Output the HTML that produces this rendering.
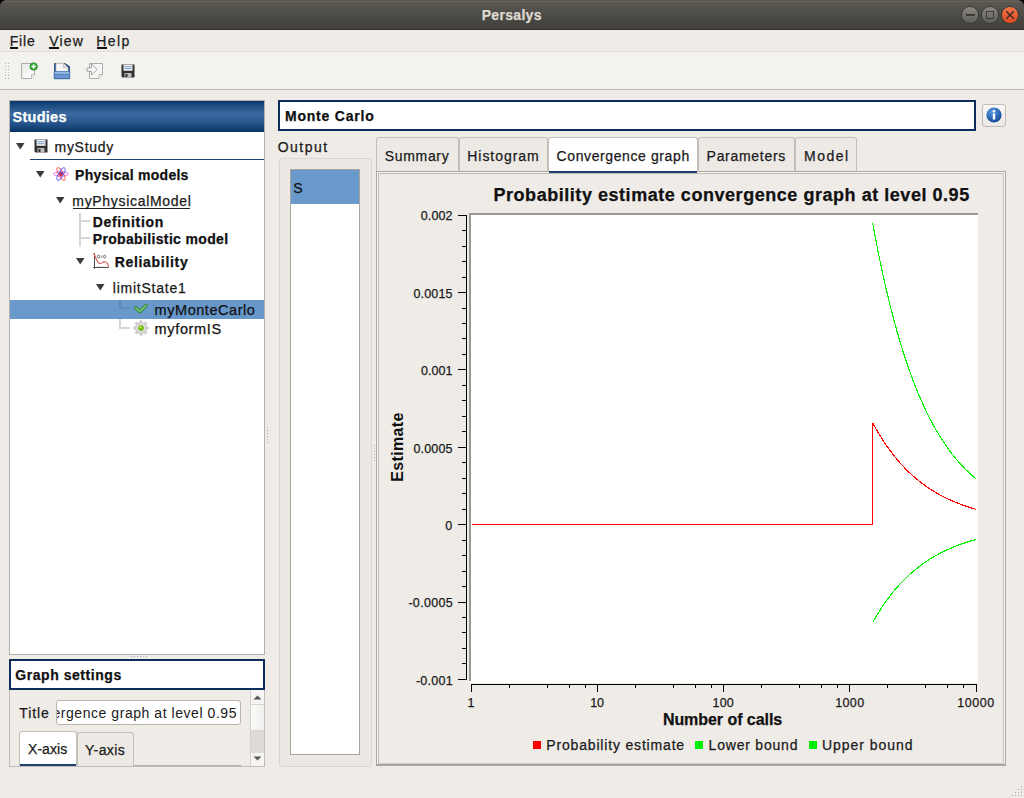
<!DOCTYPE html>
<html><head><meta charset='utf-8'><style>
html,body{margin:0;padding:0;}
body{width:1024px;height:798px;position:relative;overflow:hidden;background:#efebe7;font-family:"Liberation Sans", sans-serif;}
.t{position:absolute;white-space:pre;line-height:1;font-family:"Liberation Sans", sans-serif;-webkit-text-stroke:0.25px currentColor;}
</style></head><body>
<div style='position:absolute;left:0;top:0;width:1024px;height:8px;background:#000'></div>
<div style='position:absolute;left:0px;top:0px;width:1024px;height:30px;background:linear-gradient(#5b5952,#3f3e3a);border-radius:6px 6px 0 0'></div>
<div style='position:absolute;left:4px;top:1px;width:1016px;height:1px;background:#67645c'></div>
<div style='position:absolute;left:0px;top:29px;width:1024px;height:1px;background:#33322e'></div>
<div style='position:absolute;left:962px;top:6.699999999999999px;width:16px;height:16px;border-radius:50%;background:linear-gradient(#8a8881,#5e5d57);box-shadow:0 0 0 1px #3a3935'></div>
<div style='position:absolute;left:982px;top:6.699999999999999px;width:16px;height:16px;border-radius:50%;background:linear-gradient(#8a8881,#5e5d57);box-shadow:0 0 0 1px #3a3935'></div>
<div style='position:absolute;left:1002px;top:6.699999999999999px;width:16px;height:16px;border-radius:50%;background:linear-gradient(#f37549,#dc4a20);box-shadow:0 0 0 1px #3a3935'></div>
<div style='position:absolute;left:966px;top:14.2px;width:9px;height:1.5px;background:#3b3a36'></div>
<div style='position:absolute;left:986px;top:11px;width:8px;height:8px;box-sizing:border-box;border:1.3px solid #3b3a36'></div>
<svg style='position:absolute;left:1005px;top:10px' width='10' height='10'><path d='M1.3 1.3L8.7 8.7M8.7 1.3L1.3 8.7' stroke='#2d2a28' stroke-width='1.3'/></svg>
<div style='position:absolute;left:0px;top:30px;width:1024px;height:21px;background:#efebe7'></div>
<div style='position:absolute;left:10px;top:47px;width:8px;height:2px;background:#111'></div>
<div style='position:absolute;left:49px;top:47px;width:10px;height:2px;background:#111'></div>
<div style='position:absolute;left:97px;top:47px;width:10px;height:2px;background:#111'></div>
<div style='position:absolute;left:0px;top:51px;width:1024px;height:38px;background:#f4f2ef;border-top:1px solid #e2ded9;box-sizing:border-box'></div>
<div style='position:absolute;left:0px;top:89px;width:1024px;height:1px;background:#bdb8b2'></div>
<div style='position:absolute;left:5px;top:63px;width:1px;height:1px;background:#b9b5b0'></div>
<div style='position:absolute;left:8px;top:63px;width:1px;height:1px;background:#b9b5b0'></div>
<div style='position:absolute;left:5px;top:66px;width:1px;height:1px;background:#b9b5b0'></div>
<div style='position:absolute;left:8px;top:66px;width:1px;height:1px;background:#b9b5b0'></div>
<div style='position:absolute;left:5px;top:69px;width:1px;height:1px;background:#b9b5b0'></div>
<div style='position:absolute;left:8px;top:69px;width:1px;height:1px;background:#b9b5b0'></div>
<div style='position:absolute;left:5px;top:72px;width:1px;height:1px;background:#b9b5b0'></div>
<div style='position:absolute;left:8px;top:72px;width:1px;height:1px;background:#b9b5b0'></div>
<div style='position:absolute;left:5px;top:75px;width:1px;height:1px;background:#b9b5b0'></div>
<div style='position:absolute;left:8px;top:75px;width:1px;height:1px;background:#b9b5b0'></div>
<div style='position:absolute;left:5px;top:78px;width:1px;height:1px;background:#b9b5b0'></div>
<div style='position:absolute;left:8px;top:78px;width:1px;height:1px;background:#b9b5b0'></div>
<div style='position:absolute;left:9px;top:100px;width:256px;height:555px;box-sizing:border-box;border:1px solid #b5b0aa;background:#fff'></div>
<div style='position:absolute;left:10px;top:101px;width:254px;height:31px;background:linear-gradient(#0b386c 0%,#25558b 22%,#3a6a9f 42%,#25558a 72%,#073266 100%)'></div>
<svg style='position:absolute;left:16px;top:143px' width='9' height='7'><path d='M0 0H8.5L4.25 6.6Z' fill='#3c3c3c'/></svg>
<svg style='position:absolute;left:34px;top:139px' width='14' height='14' viewBox='0 0 14 14'>
<path d='M0.5 0.5H13.5V13.5H1.5L0.5 12.5Z' fill='#2f2f2f'/>
<rect x='2.5' y='0.8' width='9' height='6' fill='#eef3f8'/>
<rect x='3.5' y='2.2' width='7' height='1' fill='#7d9ec4'/>
<rect x='3.5' y='4.2' width='7' height='1' fill='#7d9ec4'/>
<rect x='3.5' y='9' width='7' height='4.5' fill='#bdbdbd'/>
<rect x='4.5' y='10' width='2' height='3' fill='#2f2f2f'/>
</svg>
<div style='position:absolute;left:30px;top:159px;width:234px;height:1px;background:#1b426e'></div>
<svg style='position:absolute;left:36px;top:171px' width='9' height='7'><path d='M0 0H8.5L4.25 6.6Z' fill='#3c3c3c'/></svg>
<svg style='position:absolute;left:53px;top:167px' width='16' height='14' viewBox='0 0 16 14'>
<ellipse cx='8' cy='7' rx='7.3' ry='2.3' fill='none' stroke='#f070f0' stroke-width='1'/>
<ellipse cx='8' cy='7' rx='7' ry='2.3' fill='none' stroke='#ff5a5a' stroke-width='1' transform='rotate(60 8 7)'/>
<ellipse cx='8' cy='7' rx='7' ry='2.3' fill='none' stroke='#6a6aff' stroke-width='1' transform='rotate(-60 8 7)'/>
<circle cx='8' cy='7' r='2' fill='#d02040'/><circle cx='9' cy='6' r='1' fill='#3050d0'/>
</svg>
<svg style='position:absolute;left:56px;top:197px' width='9' height='7'><path d='M0 0H8.5L4.25 6.6Z' fill='#3c3c3c'/></svg>
<div style='position:absolute;left:73px;top:208px;width:117px;height:1px;background:#222'></div>
<div style='position:absolute;left:79px;top:213px;width:2px;height:34px;background:#d9d5d1'></div>
<div style='position:absolute;left:81px;top:220px;width:9px;height:2px;background:#d9d5d1'></div>
<div style='position:absolute;left:81px;top:237px;width:9px;height:2px;background:#d9d5d1'></div>
<svg style='position:absolute;left:76px;top:258px' width='9' height='7'><path d='M0 0H8.5L4.25 6.6Z' fill='#3c3c3c'/></svg>
<svg style='position:absolute;left:92px;top:252px' width='18' height='18' viewBox='0 0 18 18'>
<rect x='2' y='1.2' width='1' height='15.5' fill='#505050'/>
<rect x='1.2' y='15' width='15.6' height='1' fill='#505050'/>
<path d='M6.5 14.3V15M8.5 14.3V15M11.5 14.3V15M13.5 14.3V15' stroke='#aaa' stroke-width='0.8'/>
<path d='M1.5 1.2C3.5 4 4.5 10 7.5 11.5C9.5 12.3 11 9.3 13 9.7C15 10.2 16.3 12.5 16.6 15' fill='none' stroke='#e05a5a' stroke-width='1.1'/>
<ellipse cx='6.6' cy='4.6' rx='1.3' ry='1.4' fill='none' stroke='#666' stroke-width='0.9'/>
<path d='M8.8 4H10.6M8.8 5.3H10.6' stroke='#777' stroke-width='0.7'/>
<ellipse cx='12.6' cy='4.6' rx='1.1' ry='1.4' fill='none' stroke='#666' stroke-width='0.9'/>
</svg>
<svg style='position:absolute;left:96px;top:284px' width='9' height='7'><path d='M0 0H8.5L4.25 6.6Z' fill='#3c3c3c'/></svg>
<div style='position:absolute;left:10px;top:300px;width:254px;height:19px;background:#6a9acc'></div>
<div style='position:absolute;left:153px;top:300px;width:111px;height:19px;background:#6898ca;box-shadow:inset 1px 0 0 #5f8fc2'></div>
<div style='position:absolute;left:119px;top:300px;width:2px;height:9px;background:#6189b5'></div>
<div style='position:absolute;left:121px;top:307px;width:9px;height:2px;background:#6189b5'></div>
<div style='position:absolute;left:119px;top:319px;width:2px;height:10px;background:#d9d5d1'></div>
<div style='position:absolute;left:121px;top:327px;width:9px;height:2px;background:#d9d5d1'></div>
<svg style='position:absolute;left:133px;top:302px' width='16' height='13' viewBox='0 0 16 13'>
<path d='M3 6L6.8 9.5L13 3.5' fill='none' stroke='#2e7d32' stroke-width='3.6' stroke-linecap='round' stroke-linejoin='round'/>
<path d='M3 6L6.8 9.5L13 3.5' fill='none' stroke='#6cc070' stroke-width='2.0' stroke-linecap='round' stroke-linejoin='round'/>
</svg>
<svg style='position:absolute;left:133px;top:320px' width='16' height='16' viewBox='0 0 16 16'>
<rect x='6.5' y='0.3' width='3' height='3.5' fill='#cdcdcd' transform='rotate(0 8 8)'/><rect x='6.5' y='0.3' width='3' height='3.5' fill='#cdcdcd' transform='rotate(45 8 8)'/><rect x='6.5' y='0.3' width='3' height='3.5' fill='#cdcdcd' transform='rotate(90 8 8)'/><rect x='6.5' y='0.3' width='3' height='3.5' fill='#cdcdcd' transform='rotate(135 8 8)'/><rect x='6.5' y='0.3' width='3' height='3.5' fill='#cdcdcd' transform='rotate(180 8 8)'/><rect x='6.5' y='0.3' width='3' height='3.5' fill='#cdcdcd' transform='rotate(225 8 8)'/><rect x='6.5' y='0.3' width='3' height='3.5' fill='#cdcdcd' transform='rotate(270 8 8)'/><rect x='6.5' y='0.3' width='3' height='3.5' fill='#cdcdcd' transform='rotate(315 8 8)'/><circle cx='8' cy='8' r='5.6' fill='#dadada' stroke='#c4c4c4' stroke-width='0.7'/>
<circle cx='8' cy='8' r='2.5' fill='#7cc400' stroke='#5c9a00' stroke-width='0.5'/><circle cx='7.4' cy='7.3' r='0.9' fill='#d8ff90'/>
</svg>
<div style='position:absolute;left:131px;top:656px;width:1px;height:1px;background:#aaa'></div>
<div style='position:absolute;left:134px;top:656px;width:1px;height:1px;background:#aaa'></div>
<div style='position:absolute;left:137px;top:656px;width:1px;height:1px;background:#aaa'></div>
<div style='position:absolute;left:140px;top:656px;width:1px;height:1px;background:#aaa'></div>
<div style='position:absolute;left:143px;top:656px;width:1px;height:1px;background:#aaa'></div>
<div style='position:absolute;left:146px;top:656px;width:1px;height:1px;background:#aaa'></div>
<div style='position:absolute;left:9px;top:659px;width:256px;height:31px;box-sizing:border-box;border:2px solid #0c2c5c;background:#fff'></div>
<div style='position:absolute;left:9px;top:690px;width:256px;height:77px;box-sizing:border-box;border:1px solid #c2bdb7;border-top:none;background:#efebe7'></div>
<div style='position:absolute;left:56px;top:700px;width:185px;height:25px;box-sizing:border-box;border:1px solid #b9b4ae;border-radius:3px;background:#fff;overflow:hidden'><div style='position:absolute;right:3px;top:0;white-space:pre;font-family:"Liberation Sans";font-size:14px;line-height:25px;color:#1a1a1a;letter-spacing:0.55px'>Probability estimate convergence graph at level 0.95</div></div>
<div style='position:absolute;left:19px;top:765px;width:222px;height:1px;background:#b4afa9'></div>
<div style='position:absolute;left:77px;top:732px;width:57px;height:34px;box-sizing:border-box;border:1px solid #c3beb8;border-bottom:none;border-radius:3px 3px 0 0;background:#edeae6'></div>
<div style='position:absolute;left:19px;top:731px;width:58px;height:35px;box-sizing:border-box;border:1px solid #c3beb8;border-bottom:none;border-radius:3px 3px 0 0;background:#fff'></div>
<div style='position:absolute;left:20px;top:764px;width:56px;height:2px;background:#1b3f6e'></div>
<div style='position:absolute;left:250px;top:690px;width:14px;height:76px;box-sizing:border-box;border-left:1px solid #d6d2cd;background:#f6f5f3'></div>
<div style='position:absolute;left:251px;top:704px;width:13px;height:27px;background:linear-gradient(90deg,#fbfbfa,#f0efed);border-top:1px solid #d9d5d0;border-bottom:1px solid #d9d5d0;box-sizing:border-box'></div>
<div style='position:absolute;left:251px;top:731px;width:13px;height:22px;background:#dedbd7'></div>
<svg style='position:absolute;left:252px;top:694px' width='11' height='7'><path d='M1.5 5.5L5.5 1.5L9.5 5.5Z' fill='#555'/></svg>
<svg style='position:absolute;left:252px;top:755px' width='11' height='7'><path d='M1.5 1.5L5.5 5.5L9.5 1.5Z' fill='#555'/></svg>
<div style='position:absolute;left:267px;top:427px;width:1px;height:1px;background:#aaa'></div>
<div style='position:absolute;left:267px;top:430px;width:1px;height:1px;background:#aaa'></div>
<div style='position:absolute;left:267px;top:433px;width:1px;height:1px;background:#aaa'></div>
<div style='position:absolute;left:267px;top:436px;width:1px;height:1px;background:#aaa'></div>
<div style='position:absolute;left:267px;top:439px;width:1px;height:1px;background:#aaa'></div>
<div style='position:absolute;left:267px;top:442px;width:1px;height:1px;background:#aaa'></div>
<div style='position:absolute;left:278px;top:100px;width:698px;height:31px;box-sizing:border-box;border:2px solid #0c2c5c;background:#fff'></div>
<div style='position:absolute;left:982px;top:104px;width:24px;height:23px;box-sizing:border-box;border:1px solid #c0bbb5;border-radius:3px;background:linear-gradient(#fbfaf9,#ebe8e4)'></div>
<svg style='position:absolute;left:986px;top:107px' width='16' height='16' viewBox='0 0 16 16'>
<defs><radialGradient id='ig' cx='0.4' cy='0.3' r='0.8'><stop offset='0' stop-color='#5a9ae6'/><stop offset='1' stop-color='#0a3f8c'/></radialGradient></defs>
<circle cx='8' cy='8' r='7.6' fill='url(#ig)'/>
<circle cx='8' cy='4.3' r='1.3' fill='#fff'/><rect x='6.8' y='6.5' width='2.4' height='6' fill='#fff'/>
</svg>
<div style='position:absolute;left:279px;top:158px;width:93px;height:609px;box-sizing:border-box;border:1px solid #d9d5d0;border-radius:3px;background:#ece9e5'></div>
<div style='position:absolute;left:290px;top:169px;width:70px;height:586px;box-sizing:border-box;border:1px solid #a9a49e;background:#fff'></div>
<div style='position:absolute;left:291px;top:170px;width:68px;height:34px;background:#6a9acc'></div>
<div style='position:absolute;left:374px;top:445px;width:1px;height:1px;background:#aaa'></div>
<div style='position:absolute;left:374px;top:448px;width:1px;height:1px;background:#aaa'></div>
<div style='position:absolute;left:374px;top:451px;width:1px;height:1px;background:#aaa'></div>
<div style='position:absolute;left:374px;top:454px;width:1px;height:1px;background:#aaa'></div>
<div style='position:absolute;left:374px;top:457px;width:1px;height:1px;background:#aaa'></div>
<div style='position:absolute;left:374px;top:460px;width:1px;height:1px;background:#aaa'></div>
<div style='position:absolute;left:376px;top:171px;width:630px;height:595px;box-sizing:border-box;border:1px solid #aaa59f;background:#efebe7'></div>
<div style='position:absolute;left:377px;top:172px;width:628px;height:593px;box-sizing:border-box;border:1px solid #fbfaf9'></div>
<div style='position:absolute;left:378px;top:173px;width:626px;height:591px;box-sizing:border-box;border:1px solid #bdb8b2;border-right-color:#c8c3bd;border-bottom-color:#c8c3bd'></div>
<div style='position:absolute;left:376px;top:764px;width:630px;height:2px;background:#aaa59f'></div>
<div style='position:absolute;left:378px;top:763px;width:626px;height:1px;background:#cfcac5'></div>
<div style='position:absolute;left:376px;top:137px;width:83px;height:34px;box-sizing:border-box;border:1px solid #c3beb8;border-bottom:none;border-radius:3px 3px 0 0;background:#edeae6'></div>
<div style='position:absolute;left:459px;top:137px;width:89px;height:34px;box-sizing:border-box;border:1px solid #c3beb8;border-bottom:none;border-radius:3px 3px 0 0;background:#edeae6'></div>
<div style='position:absolute;left:698px;top:137px;width:97px;height:34px;box-sizing:border-box;border:1px solid #c3beb8;border-bottom:none;border-radius:3px 3px 0 0;background:#edeae6'></div>
<div style='position:absolute;left:795px;top:137px;width:62px;height:34px;box-sizing:border-box;border:1px solid #c3beb8;border-bottom:none;border-radius:3px 3px 0 0;background:#edeae6'></div>
<div style='position:absolute;left:548px;top:137px;width:150px;height:35px;box-sizing:border-box;border:1px solid #c3beb8;border-bottom:none;border-radius:3px 3px 0 0;background:#fff'></div>
<div style='position:absolute;left:549px;top:171px;width:148px;height:2px;background:#1b3f6e'></div>
<svg style='position:absolute;left:0;top:0' width='1024' height='798' shape-rendering='crispEdges'>
<rect x='469' y='213' width='509' height='470' fill='#fff'/>
<rect x='469' y='213' width='509' height='2' fill='#9a9a98'/>
<rect x='469' y='213' width='2' height='468' fill='#9a9a98'/>
<rect x='466' y='215' width='1' height='465' fill='#000'/>
<rect x='458' y='215' width='8' height='1' fill='#000'/>
<rect x='462' y='230' width='4' height='1' fill='#000'/>
<rect x='462' y='246' width='4' height='1' fill='#000'/>
<rect x='462' y='261' width='4' height='1' fill='#000'/>
<rect x='462' y='277' width='4' height='1' fill='#000'/>
<rect x='458' y='292' width='8' height='1' fill='#000'/>
<rect x='462' y='308' width='4' height='1' fill='#000'/>
<rect x='462' y='323' width='4' height='1' fill='#000'/>
<rect x='462' y='338' width='4' height='1' fill='#000'/>
<rect x='462' y='354' width='4' height='1' fill='#000'/>
<rect x='458' y='369' width='8' height='1' fill='#000'/>
<rect x='462' y='385' width='4' height='1' fill='#000'/>
<rect x='462' y='400' width='4' height='1' fill='#000'/>
<rect x='462' y='416' width='4' height='1' fill='#000'/>
<rect x='462' y='431' width='4' height='1' fill='#000'/>
<rect x='458' y='447' width='8' height='1' fill='#000'/>
<rect x='462' y='462' width='4' height='1' fill='#000'/>
<rect x='462' y='478' width='4' height='1' fill='#000'/>
<rect x='462' y='493' width='4' height='1' fill='#000'/>
<rect x='462' y='509' width='4' height='1' fill='#000'/>
<rect x='458' y='524' width='8' height='1' fill='#000'/>
<rect x='462' y='540' width='4' height='1' fill='#000'/>
<rect x='462' y='555' width='4' height='1' fill='#000'/>
<rect x='462' y='571' width='4' height='1' fill='#000'/>
<rect x='462' y='586' width='4' height='1' fill='#000'/>
<rect x='458' y='602' width='8' height='1' fill='#000'/>
<rect x='462' y='617' width='4' height='1' fill='#000'/>
<rect x='462' y='632' width='4' height='1' fill='#000'/>
<rect x='462' y='648' width='4' height='1' fill='#000'/>
<rect x='462' y='663' width='4' height='1' fill='#000'/>
<rect x='458' y='679' width='8' height='1' fill='#000'/>
<rect x='471' y='684' width='506' height='1' fill='#000'/>
<rect x='471' y='684' width='1' height='8' fill='#000'/>
<rect x='509' y='684' width='1' height='4' fill='#000'/>
<rect x='547' y='684' width='1' height='4' fill='#000'/>
<rect x='569' y='684' width='1' height='4' fill='#000'/>
<rect x='585' y='684' width='1' height='4' fill='#000'/>
<rect x='597' y='684' width='1' height='8' fill='#000'/>
<rect x='635' y='684' width='1' height='4' fill='#000'/>
<rect x='673' y='684' width='1' height='4' fill='#000'/>
<rect x='695' y='684' width='1' height='4' fill='#000'/>
<rect x='711' y='684' width='1' height='4' fill='#000'/>
<rect x='723' y='684' width='1' height='8' fill='#000'/>
<rect x='761' y='684' width='1' height='4' fill='#000'/>
<rect x='799' y='684' width='1' height='4' fill='#000'/>
<rect x='821' y='684' width='1' height='4' fill='#000'/>
<rect x='837' y='684' width='1' height='4' fill='#000'/>
<rect x='849' y='684' width='1' height='8' fill='#000'/>
<rect x='887' y='684' width='1' height='4' fill='#000'/>
<rect x='925' y='684' width='1' height='4' fill='#000'/>
<rect x='947' y='684' width='1' height='4' fill='#000'/>
<rect x='963' y='684' width='1' height='4' fill='#000'/>
<rect x='976' y='684' width='1' height='8' fill='#000'/>
<polyline points='471.50,524.70 872.73,524.70 872.73,422.90 872.98,423.36 873.23,423.83 873.52,424.35 873.77,424.80 874.01,425.25 874.29,425.76 874.54,426.20 874.82,426.70 875.06,427.13 875.30,427.56 875.57,428.05 875.85,428.53 876.08,428.95 876.35,429.42 876.62,429.88 876.86,430.29 877.13,430.75 877.39,431.20 877.65,431.65 877.92,432.10 878.15,432.48 878.41,432.92 878.67,433.35 878.92,433.78 879.18,434.21 879.47,434.68 879.72,435.10 879.98,435.51 880.23,435.92 880.48,436.33 880.76,436.78 881.01,437.18 881.25,437.57 881.53,438.01 881.78,438.40 882.05,438.83 882.29,439.21 882.56,439.63 882.81,440.00 883.07,440.42 883.34,440.83 883.58,441.19 883.84,441.60 884.11,442.00 884.37,442.39 884.63,442.78 884.89,443.17 885.15,443.56 885.41,443.94 885.67,444.32 885.92,444.69 886.18,445.06 886.43,445.43 886.68,445.79 886.96,446.19 887.21,446.55 887.46,446.90 887.73,447.29 887.98,447.64 888.25,448.02 888.49,448.36 888.76,448.74 889.03,449.11 889.27,449.44 889.54,449.80 889.80,450.16 890.07,450.52 890.30,450.84 890.56,451.19 890.82,451.54 891.08,451.88 891.34,452.22 891.62,452.59 891.87,452.93 892.13,453.26 892.38,453.59 892.63,453.91 892.90,454.27 893.15,454.59 893.43,454.93 893.67,455.25 893.94,455.59 894.19,455.90 894.45,456.23 894.72,456.56 894.96,456.86 895.22,457.19 895.49,457.51 895.75,457.83 896.01,458.15 896.26,458.46 896.52,458.77 896.78,459.08 897.03,459.38 897.29,459.68 897.56,460.01 897.81,460.31 898.06,460.60 898.33,460.92 898.58,461.20 898.85,461.52 899.10,461.80 899.36,462.10 899.63,462.41 899.87,462.68 900.13,462.98 900.39,463.27 900.66,463.56 900.91,463.85 901.17,464.14 901.43,464.42 901.68,464.70 901.96,465.00 902.21,465.28 902.46,465.55 902.71,465.82 902.98,466.11 903.23,466.37 903.50,466.66 903.77,466.94 904.01,467.20 904.28,467.47 904.54,467.75 904.80,468.02 905.06,468.29 905.32,468.55 905.58,468.82 905.83,469.08 906.09,469.34 906.34,469.59 906.60,469.85 906.87,470.12 907.12,470.37 907.39,470.63 907.63,470.88 907.90,471.14 908.15,471.38 908.41,471.63 908.67,471.89 908.93,472.14 909.19,472.39 909.45,472.63 909.71,472.88 909.96,473.12 910.22,473.36 910.47,473.60 910.74,473.85 911.00,474.08 911.26,474.33 911.51,474.56 911.78,474.80 912.03,475.02 912.29,475.26 912.55,475.50 912.81,475.73 913.07,475.96 913.33,476.19 913.58,476.42 913.84,476.64 914.10,476.87 914.37,477.10 914.62,477.32 914.89,477.55 915.13,477.77 915.40,477.99 915.65,478.20 915.91,478.43 916.17,478.65 916.43,478.86 916.69,479.08 916.95,479.30 917.20,479.51 917.46,479.72 917.71,479.93 917.98,480.14 918.23,480.35 918.50,480.56 918.75,480.76 919.01,480.98 919.28,481.18 919.54,481.39 919.80,481.60 920.06,481.80 920.31,482.00 920.57,482.20 920.83,482.40 921.08,482.59 921.35,482.80 921.60,482.99 921.86,483.19 922.11,483.38 922.37,483.58 922.64,483.77 922.90,483.97 923.16,484.16 923.41,484.35 923.67,484.54 923.92,484.73 924.19,484.92 924.45,485.10 924.70,485.29 924.96,485.48 925.22,485.66 925.47,485.84 925.73,486.02 925.99,486.21 926.25,486.39 926.51,486.57 926.78,486.75 927.03,486.93 927.29,487.11 927.55,487.29 927.80,487.46 928.06,487.64 928.33,487.81 928.59,487.99 928.85,488.16 929.10,488.33 929.36,488.50 929.62,488.67 929.87,488.84 930.14,489.01 930.39,489.18 930.65,489.35 930.91,489.52 931.16,489.68 931.42,489.84 931.68,490.00 931.94,490.17 932.21,490.34 932.46,490.50 932.72,490.65 932.98,490.82 933.23,490.97 933.49,491.13 933.75,491.29 934.01,491.45 934.27,491.61 934.53,491.76 934.78,491.92 935.05,492.08 935.30,492.23 935.57,492.38 935.82,492.53 936.08,492.68 936.34,492.83 936.60,492.98 936.86,493.13 937.11,493.28 937.37,493.43 937.63,493.58 937.89,493.72 938.15,493.87 938.41,494.02 938.67,494.16 938.93,494.31 939.19,494.45 939.44,494.59 939.70,494.73 939.96,494.87 940.21,495.01 940.48,495.15 940.74,495.29 941.00,495.43 941.26,495.57 941.51,495.71 941.77,495.84 942.02,495.98 942.29,496.11 942.55,496.25 942.80,496.38 943.06,496.51 943.32,496.65 943.58,496.78 943.83,496.91 944.10,497.04 944.35,497.17 944.61,497.30 944.88,497.43 945.13,497.56 945.38,497.69 945.65,497.82 945.91,497.94 946.16,498.07 946.43,498.19 946.68,498.32 946.94,498.44 947.20,498.57 947.46,498.69 947.71,498.81 947.97,498.93 948.23,499.06 948.49,499.17 948.75,499.30 949.01,499.42 949.27,499.53 949.53,499.65 949.78,499.77 950.05,499.89 950.30,500.00 950.56,500.12 950.82,500.24 951.08,500.35 951.34,500.47 951.60,500.58 951.85,500.69 952.11,500.81 952.37,500.92 952.63,501.03 952.89,501.14 953.14,501.25 953.40,501.36 953.66,501.48 953.92,501.58 954.18,501.69 954.44,501.80 954.70,501.91 954.96,502.02 955.21,502.12 955.48,502.23 955.73,502.34 955.99,502.44 956.25,502.55 956.51,502.65 956.76,502.75 957.03,502.86 957.28,502.96 957.54,503.06 957.80,503.17 958.06,503.27 958.32,503.37 958.57,503.47 958.84,503.57 959.09,503.67 959.35,503.77 959.61,503.87 959.87,503.96 960.13,504.06 960.39,504.16 960.65,504.26 960.90,504.35 961.16,504.45 961.42,504.54 961.68,504.64 961.93,504.73 962.19,504.83 962.45,504.92 962.71,505.01 962.97,505.11 963.23,505.20 963.49,505.29 963.75,505.38 964.01,505.47 964.27,505.56 964.52,505.65 964.78,505.74 965.04,505.83 965.30,505.92 965.56,506.01 965.81,506.10 966.08,506.19 966.33,506.27 966.59,506.36 966.85,506.45 967.11,506.53 967.37,506.62 967.63,506.70 967.88,506.79 968.14,506.87 968.40,506.95 968.66,507.04 968.92,507.12 969.18,507.21 969.44,507.29 969.70,507.37 969.95,507.45 970.21,507.53 970.47,507.61 970.73,507.69 970.99,507.77 971.24,507.85 971.51,507.93 971.76,508.01 972.02,508.09 972.28,508.17 972.54,508.25 972.80,508.32 973.06,508.40 973.32,508.48 973.57,508.55 973.83,508.63 974.09,508.71 974.35,508.78 974.61,508.86 974.87,508.93 975.12,509.00 975.38,509.08 975.64,509.15 975.90,509.23' fill='none' stroke='#ff0000' stroke-width='1.15' shape-rendering='crispEdges'/>
<polyline points='872.73,223.43 872.98,224.81 873.23,226.18 873.52,227.73 873.77,229.07 874.01,230.40 874.29,231.90 874.54,233.21 874.82,234.68 875.06,235.96 875.30,237.23 875.57,238.67 875.85,240.09 876.08,241.32 876.35,242.72 876.62,244.10 876.86,245.30 877.13,246.66 877.39,248.00 877.65,249.33 877.92,250.65 878.15,251.79 878.41,253.09 878.67,254.37 878.92,255.64 879.18,256.90 879.47,258.30 879.72,259.53 879.98,260.76 880.23,261.97 880.48,263.17 880.76,264.50 881.01,265.68 881.25,266.85 881.53,268.15 881.78,269.29 882.05,270.57 882.29,271.69 882.56,272.94 882.81,274.04 883.07,275.27 883.34,276.49 883.58,277.56 883.84,278.76 884.11,279.94 884.37,281.11 884.63,282.27 884.89,283.42 885.15,284.56 885.41,285.69 885.67,286.80 885.92,287.91 886.18,289.01 886.43,290.09 886.68,291.17 886.96,292.35 887.21,293.41 887.46,294.46 887.73,295.61 887.98,296.63 888.25,297.76 888.49,298.77 888.76,299.88 889.03,300.98 889.27,301.96 889.54,303.04 889.80,304.10 890.07,305.16 890.30,306.10 890.56,307.14 890.82,308.17 891.08,309.19 891.34,310.20 891.62,311.30 891.87,312.29 892.13,313.27 892.38,314.24 892.63,315.20 892.90,316.25 893.15,317.20 893.43,318.22 893.67,319.15 893.94,320.16 894.19,321.07 894.45,322.06 894.72,323.04 894.96,323.93 895.22,324.89 895.49,325.84 895.75,326.79 896.01,327.73 896.26,328.65 896.52,329.57 896.78,330.48 897.03,331.38 897.29,332.28 897.56,333.24 897.81,334.12 898.06,334.99 898.33,335.93 898.58,336.78 898.85,337.70 899.10,338.53 899.36,339.44 899.63,340.33 899.87,341.15 900.13,342.02 900.39,342.89 900.66,343.76 900.91,344.61 901.17,345.45 901.43,346.29 901.68,347.12 901.96,348.01 902.21,348.83 902.46,349.63 902.71,350.43 902.98,351.29 903.23,352.08 903.50,352.92 903.77,353.75 904.01,354.51 904.28,355.33 904.54,356.14 904.80,356.94 905.06,357.74 905.32,358.53 905.58,359.31 905.83,360.08 906.09,360.84 906.34,361.60 906.60,362.35 906.87,363.16 907.12,363.89 907.39,364.68 907.63,365.40 907.90,366.18 908.15,366.89 908.41,367.64 908.67,368.39 908.93,369.14 909.19,369.87 909.45,370.60 909.71,371.32 909.96,372.04 910.22,372.75 910.47,373.45 910.74,374.20 911.00,374.89 911.26,375.62 911.51,376.29 911.78,377.01 912.03,377.68 912.29,378.38 912.55,379.08 912.81,379.77 913.07,380.45 913.33,381.13 913.58,381.80 913.84,382.47 914.10,383.13 914.37,383.83 914.62,384.47 914.89,385.16 915.13,385.79 915.40,386.46 915.65,387.08 915.91,387.74 916.17,388.39 916.43,389.04 916.69,389.68 916.95,390.31 917.20,390.94 917.46,391.56 917.71,392.18 917.98,392.83 918.23,393.43 918.50,394.07 918.75,394.66 919.01,395.29 919.28,395.91 919.54,396.52 919.80,397.13 920.06,397.73 920.31,398.32 920.57,398.91 920.83,399.50 921.08,400.08 921.35,400.68 921.60,401.25 921.86,401.85 922.11,402.41 922.37,402.99 922.64,403.57 922.90,404.14 923.16,404.71 923.41,405.28 923.67,405.83 923.92,406.39 924.19,406.96 924.45,407.51 924.70,408.04 924.96,408.61 925.22,409.16 925.47,409.68 925.73,410.23 925.99,410.77 926.25,411.31 926.51,411.84 926.78,412.39 927.03,412.91 927.29,413.43 927.55,413.97 927.80,414.47 928.06,415.00 928.33,415.52 928.59,416.04 928.85,416.55 929.10,417.06 929.36,417.57 929.62,418.07 929.87,418.56 930.14,419.07 930.39,419.56 930.65,420.06 930.91,420.56 931.16,421.03 931.42,421.52 931.68,422.01 931.94,422.49 932.21,422.99 932.46,423.46 932.72,423.93 932.98,424.42 933.23,424.87 933.49,425.35 933.75,425.82 934.01,426.29 934.27,426.75 934.53,427.21 934.78,427.67 935.05,428.14 935.30,428.58 935.57,429.04 935.82,429.48 936.08,429.94 936.34,430.38 936.60,430.83 936.86,431.27 937.11,431.71 937.37,432.14 937.63,432.58 937.89,433.01 938.15,433.45 938.41,433.88 938.67,434.31 938.93,434.74 939.19,435.16 939.44,435.58 939.70,435.99 939.96,436.42 940.21,436.83 940.48,437.25 940.74,437.66 941.00,438.07 941.26,438.48 941.51,438.88 941.77,439.28 942.02,439.68 942.29,440.09 942.55,440.49 942.80,440.88 943.06,441.28 943.32,441.67 943.58,442.06 943.83,442.44 944.10,442.84 944.35,443.22 944.61,443.61 944.88,443.99 945.13,444.36 945.38,444.74 945.65,445.13 945.91,445.50 946.16,445.87 946.43,446.25 946.68,446.61 946.94,446.98 947.20,447.35 947.46,447.71 947.71,448.07 947.97,448.43 948.23,448.80 948.49,449.15 948.75,449.51 949.01,449.86 949.27,450.22 949.53,450.57 949.78,450.91 950.05,451.27 950.30,451.61 950.56,451.95 950.82,452.30 951.08,452.64 951.34,452.98 951.60,453.31 951.85,453.65 952.11,453.99 952.37,454.31 952.63,454.65 952.89,454.98 953.14,455.30 953.40,455.63 953.66,455.96 953.92,456.28 954.18,456.60 954.44,456.93 954.70,457.25 954.96,457.56 955.21,457.88 955.48,458.20 955.73,458.50 955.99,458.82 956.25,459.13 956.51,459.44 956.76,459.74 957.03,460.06 957.28,460.35 957.54,460.66 957.80,460.96 958.06,461.26 958.32,461.56 958.57,461.86 958.84,462.16 959.09,462.45 959.35,462.74 959.61,463.03 959.87,463.32 960.13,463.62 960.39,463.90 960.65,464.19 960.90,464.47 961.16,464.75 961.42,465.04 961.68,465.32 961.93,465.59 962.19,465.88 962.45,466.15 962.71,466.43 962.97,466.70 963.23,466.98 963.49,467.25 963.75,467.52 964.01,467.79 964.27,468.06 964.52,468.32 964.78,468.59 965.04,468.85 965.30,469.12 965.56,469.38 965.81,469.64 966.08,469.90 966.33,470.16 966.59,470.41 966.85,470.67 967.11,470.92 967.37,471.18 967.63,471.43 967.88,471.68 968.14,471.93 968.40,472.18 968.66,472.43 968.92,472.67 969.18,472.92 969.44,473.16 969.70,473.40 969.95,473.65 970.21,473.88 970.47,474.12 970.73,474.36 970.99,474.60 971.24,474.83 971.51,475.07 971.76,475.30 972.02,475.54 972.28,475.77 972.54,476.00 972.80,476.23 973.06,476.46 973.32,476.69 973.57,476.91 973.83,477.13 974.09,477.36 974.35,477.58 974.61,477.81 974.87,478.03 975.12,478.24 975.38,478.46 975.64,478.68 975.90,478.90' fill='none' stroke='#00f000' stroke-width='1.15' shape-rendering='crispEdges'/>
<polyline points='872.73,622.36 872.98,621.92 873.23,621.47 873.52,620.97 873.77,620.54 874.01,620.11 874.29,619.62 874.54,619.20 874.82,618.72 875.06,618.30 875.30,617.89 875.57,617.43 875.85,616.97 876.08,616.57 876.35,616.11 876.62,615.67 876.86,615.28 877.13,614.84 877.39,614.40 877.65,613.97 877.92,613.54 878.15,613.17 878.41,612.75 878.67,612.34 878.92,611.93 879.18,611.52 879.47,611.07 879.72,610.67 879.98,610.27 880.23,609.88 880.48,609.49 880.76,609.05 881.01,608.67 881.25,608.30 881.53,607.87 881.78,607.50 882.05,607.09 882.29,606.73 882.56,606.32 882.81,605.96 883.07,605.56 883.34,605.17 883.58,604.82 883.84,604.44 884.11,604.05 884.37,603.67 884.63,603.30 884.89,602.92 885.15,602.56 885.41,602.19 885.67,601.83 885.92,601.47 886.18,601.11 886.43,600.76 886.68,600.41 886.96,600.03 887.21,599.69 887.46,599.35 887.73,598.97 887.98,598.64 888.25,598.28 888.49,597.95 888.76,597.59 889.03,597.23 889.27,596.92 889.54,596.57 889.80,596.22 890.07,595.88 890.30,595.57 890.56,595.24 890.82,594.90 891.08,594.57 891.34,594.25 891.62,593.89 891.87,593.57 892.13,593.25 892.38,592.94 892.63,592.62 892.90,592.28 893.15,591.98 893.43,591.64 893.67,591.34 893.94,591.02 894.19,590.72 894.45,590.40 894.72,590.08 894.96,589.80 895.22,589.48 895.49,589.17 895.75,588.87 896.01,588.56 896.26,588.26 896.52,587.97 896.78,587.67 897.03,587.38 897.29,587.09 897.56,586.78 897.81,586.49 898.06,586.21 898.33,585.91 898.58,585.63 898.85,585.33 899.10,585.06 899.36,584.77 899.63,584.48 899.87,584.21 900.13,583.93 900.39,583.65 900.66,583.37 900.91,583.09 901.17,582.82 901.43,582.55 901.68,582.28 901.96,581.99 902.21,581.72 902.46,581.46 902.71,581.20 902.98,580.93 903.23,580.67 903.50,580.40 903.77,580.13 904.01,579.88 904.28,579.62 904.54,579.35 904.80,579.09 905.06,578.84 905.32,578.58 905.58,578.33 905.83,578.08 906.09,577.83 906.34,577.58 906.60,577.34 906.87,577.08 907.12,576.84 907.39,576.59 907.63,576.35 907.90,576.10 908.15,575.87 908.41,575.63 908.67,575.38 908.93,575.14 909.19,574.90 909.45,574.67 909.71,574.43 909.96,574.20 910.22,573.97 910.47,573.74 910.74,573.50 911.00,573.28 911.26,573.04 911.51,572.82 911.78,572.59 912.03,572.37 912.29,572.14 912.55,571.92 912.81,571.69 913.07,571.47 913.33,571.25 913.58,571.03 913.84,570.82 914.10,570.61 914.37,570.38 914.62,570.17 914.89,569.95 915.13,569.74 915.40,569.52 915.65,569.32 915.91,569.11 916.17,568.90 916.43,568.69 916.69,568.48 916.95,568.28 917.20,568.07 917.46,567.87 917.71,567.67 917.98,567.46 918.23,567.26 918.50,567.06 918.75,566.87 919.01,566.66 919.28,566.46 919.54,566.26 919.80,566.07 920.06,565.87 920.31,565.68 920.57,565.49 920.83,565.30 921.08,565.11 921.35,564.91 921.60,564.73 921.86,564.54 922.11,564.36 922.37,564.17 922.64,563.98 922.90,563.79 923.16,563.61 923.41,563.43 923.67,563.24 923.92,563.07 924.19,562.88 924.45,562.70 924.70,562.53 924.96,562.35 925.22,562.17 925.47,562.00 925.73,561.82 925.99,561.64 926.25,561.47 926.51,561.30 926.78,561.12 927.03,560.95 927.29,560.78 927.55,560.61 927.80,560.44 928.06,560.27 928.33,560.10 928.59,559.93 928.85,559.77 929.10,559.60 929.36,559.44 929.62,559.28 929.87,559.12 930.14,558.95 930.39,558.79 930.65,558.63 930.91,558.47 931.16,558.32 931.42,558.16 931.68,558.00 931.94,557.84 932.21,557.68 932.46,557.53 932.72,557.38 932.98,557.22 933.23,557.07 933.49,556.92 933.75,556.76 934.01,556.61 934.27,556.46 934.53,556.31 934.78,556.17 935.05,556.01 935.30,555.87 935.57,555.72 935.82,555.58 936.08,555.43 936.34,555.28 936.60,555.14 936.86,555.00 937.11,554.86 937.37,554.72 937.63,554.57 937.89,554.43 938.15,554.29 938.41,554.15 938.67,554.01 938.93,553.87 939.19,553.74 939.44,553.60 939.70,553.47 939.96,553.33 940.21,553.20 940.48,553.06 940.74,552.93 941.00,552.79 941.26,552.66 941.51,552.53 941.77,552.40 942.02,552.27 942.29,552.14 942.55,552.01 942.80,551.88 943.06,551.75 943.32,551.63 943.58,551.50 943.83,551.37 944.10,551.25 944.35,551.12 944.61,551.00 944.88,550.87 945.13,550.75 945.38,550.63 945.65,550.50 945.91,550.38 946.16,550.26 946.43,550.14 946.68,550.02 946.94,549.90 947.20,549.78 947.46,549.67 947.71,549.55 947.97,549.43 948.23,549.31 948.49,549.20 948.75,549.08 949.01,548.97 949.27,548.85 949.53,548.74 949.78,548.63 950.05,548.51 950.30,548.40 950.56,548.29 950.82,548.18 951.08,548.07 951.34,547.96 951.60,547.85 951.85,547.74 952.11,547.63 952.37,547.53 952.63,547.42 952.89,547.31 953.14,547.20 953.40,547.10 953.66,546.99 953.92,546.89 954.18,546.78 954.44,546.68 954.70,546.57 954.96,546.47 955.21,546.37 955.48,546.27 955.73,546.17 955.99,546.06 956.25,545.96 956.51,545.86 956.76,545.76 957.03,545.66 957.28,545.57 957.54,545.47 957.80,545.37 958.06,545.27 958.32,545.18 958.57,545.08 958.84,544.98 959.09,544.89 959.35,544.79 959.61,544.70 959.87,544.60 960.13,544.51 960.39,544.42 960.65,544.32 960.90,544.23 961.16,544.14 961.42,544.05 961.68,543.96 961.93,543.87 962.19,543.78 962.45,543.69 962.71,543.60 962.97,543.51 963.23,543.42 963.49,543.33 963.75,543.24 964.01,543.16 964.27,543.07 964.52,542.98 964.78,542.90 965.04,542.81 965.30,542.73 965.56,542.64 965.81,542.56 966.08,542.47 966.33,542.39 966.59,542.30 966.85,542.22 967.11,542.14 967.37,542.06 967.63,541.98 967.88,541.90 968.14,541.81 968.40,541.73 968.66,541.65 968.92,541.57 969.18,541.49 969.44,541.41 969.70,541.33 969.95,541.26 970.21,541.18 970.47,541.10 970.73,541.02 970.99,540.95 971.24,540.87 971.51,540.79 971.76,540.72 972.02,540.64 972.28,540.57 972.54,540.49 972.80,540.42 973.06,540.35 973.32,540.27 973.57,540.20 973.83,540.13 974.09,540.05 974.35,539.98 974.61,539.91 974.87,539.84 975.12,539.77 975.38,539.69 975.64,539.62 975.90,539.55' fill='none' stroke='#00f000' stroke-width='1.15' shape-rendering='crispEdges'/>
<rect x='533' y='741' width='8' height='8' fill='#ff0000'/>
<rect x='695' y='741' width='8' height='8' fill='#00ee00'/>
<rect x='809' y='741' width='8' height='8' fill='#00ee00'/>
</svg>
<div style='position:absolute;left:1021px;top:786px;width:1px;height:1px;background:#aaa6a1'></div>
<div style='position:absolute;left:1018px;top:789px;width:1px;height:1px;background:#aaa6a1'></div>
<div style='position:absolute;left:1021px;top:789px;width:1px;height:1px;background:#aaa6a1'></div>
<div style='position:absolute;left:1015px;top:792px;width:1px;height:1px;background:#aaa6a1'></div>
<div style='position:absolute;left:1018px;top:792px;width:1px;height:1px;background:#aaa6a1'></div>
<div style='position:absolute;left:1021px;top:792px;width:1px;height:1px;background:#aaa6a1'></div>
<div style='position:absolute;left:1012px;top:795px;width:1px;height:1px;background:#aaa6a1'></div>
<div style='position:absolute;left:1015px;top:795px;width:1px;height:1px;background:#aaa6a1'></div>
<div style='position:absolute;left:1018px;top:795px;width:1px;height:1px;background:#aaa6a1'></div>
<div style='position:absolute;left:1021px;top:795px;width:1px;height:1px;background:#aaa6a1'></div>
<svg style='position:absolute;left:20px;top:62px' width='18' height='18' viewBox='0 0 18 18'>
<defs><linearGradient id='pg' x1='0' y1='0' x2='1' y2='1'><stop offset='0' stop-color='#e8e8e8'/><stop offset='1' stop-color='#ffffff'/></linearGradient></defs>
<path d='M1.5 1.5H14.5V12.5L11.5 16.5H1.5Z' fill='url(#pg)' stroke='#b0aca6' stroke-width='1'/>
<path d='M14.5 12.5H11.5V16.5' fill='#f4f4f4' stroke='#b0aca6' stroke-width='0.8'/>
<circle cx='13.6' cy='4.5' r='3.8' fill='#2aa52a' stroke='#1a7a1a' stroke-width='0.5'/>
<path d='M13.6 2.3V6.7M11.4 4.5H15.8' stroke='#fff' stroke-width='1.5'/>
</svg>
<svg style='position:absolute;left:53px;top:62px' width='18' height='18' viewBox='0 0 18 18'>
<defs><linearGradient id='fg' x1='0' y1='0' x2='0' y2='1'><stop offset='0' stop-color='#9cc0ea'/><stop offset='1' stop-color='#5a8ac8'/></linearGradient></defs>
<path d='M1.5 1.5H12L16.5 4.5V16.5H1.5Z' fill='#2c5c9c' stroke='#1d3f70' stroke-width='0.8'/>
<path d='M3 1.2H10.5L15 5.7V10H3Z' fill='#f5f5f5' stroke='#b8b8b8' stroke-width='0.6'/>
<path d='M10.5 1.2V5.7H15' fill='#dcdcdc' stroke='#b0b0b0' stroke-width='0.6'/>
<path d='M1.2 9.5H16.8V16.3Q16.8 16.8 16.3 16.8H1.7Q1.2 16.8 1.2 16.3Z' fill='url(#fg)' stroke='#3d6aa5' stroke-width='0.7'/>
<path d='M1.5 12.8H16.5' stroke='#4777b5' stroke-width='1'/>
</svg>
<svg style='position:absolute;left:86px;top:62px' width='18' height='18' viewBox='0 0 18 18'>
<path d='M3.5 1.5H16.5V12.5L13 16.5H3.5Z' fill='#f6f6f6' stroke='#b0aca6' stroke-width='1'/>
<path d='M16.5 12.5H13V16.5' fill='#eee' stroke='#b0aca6' stroke-width='0.8'/>
<path d='M1 6H5.5V1.8L11 7.5L5.5 12.8V9.3H1Z' fill='#fbfbfb' stroke='#9a9a9a' stroke-width='0.9' stroke-linejoin='round'/>
</svg>
<svg style='position:absolute;left:121px;top:64px' width='14' height='14' viewBox='0 0 14 14'>
<path d='M0.5 0.5H13.5V13.5H1.5L0.5 12.5Z' fill='#2f2f2f'/>
<rect x='2.5' y='0.8' width='9' height='6' fill='#eef3f8'/>
<rect x='3.5' y='2.2' width='7' height='1' fill='#7d9ec4'/>
<rect x='3.5' y='4.2' width='7' height='1' fill='#7d9ec4'/>
<rect x='3.5' y='9' width='7' height='4.5' fill='#bdbdbd'/>
<rect x='4.5' y='10' width='2' height='3' fill='#2f2f2f'/>
</svg>
<div style='position:absolute;left:398px;top:446.5px;width:0;height:0'><div style='position:absolute;left:0;top:0;transform:translate(-50%,-50%) rotate(-90deg);white-space:nowrap;font-family:"Liberation Sans";font-size:16px;font-weight:700;line-height:16px;color:#111;letter-spacing:0.35px'>Estimate</div></div>
<div class='t' style='left:481.70px;top:8.00px;font-size:14px;font-weight:700;color:#dfdbd2;letter-spacing:0.314px;'>Persalys</div>
<div class='t' style='left:9.70px;top:34.00px;font-size:14px;font-weight:400;color:#1c1c1c;letter-spacing:0.833px;'>File</div>
<div class='t' style='left:49.20px;top:34.00px;font-size:14px;font-weight:400;color:#1c1c1c;letter-spacing:1.167px;'>View</div>
<div class='t' style='left:96.30px;top:34.00px;font-size:14px;font-weight:400;color:#1c1c1c;letter-spacing:1.400px;'>Help</div>
<div class='t' style='left:12.60px;top:110.00px;font-size:14.5px;font-weight:700;color:#ffffff;letter-spacing:0.250px;'>Studies</div>
<div class='t' style='left:54.60px;top:140.00px;font-size:14px;font-weight:400;color:#1a1a1a;letter-spacing:0.683px;'>myStudy</div>
<div class='t' style='left:75.10px;top:168.00px;font-size:14px;font-weight:700;color:#111;letter-spacing:0.257px;'>Physical models</div>
<div class='t' style='left:72.30px;top:194.00px;font-size:14px;font-weight:400;color:#1a1a1a;letter-spacing:0.686px;'>myPhysicalModel</div>
<div class='t' style='left:92.70px;top:215.00px;font-size:14px;font-weight:700;color:#111;letter-spacing:0.667px;'>Definition</div>
<div class='t' style='left:92.70px;top:232.00px;font-size:14px;font-weight:700;color:#111;letter-spacing:0.350px;'>Probabilistic model</div>
<div class='t' style='left:114.70px;top:255.00px;font-size:14px;font-weight:700;color:#111;letter-spacing:0.690px;'>Reliability</div>
<div class='t' style='left:112.80px;top:281.00px;font-size:14px;font-weight:400;color:#1a1a1a;letter-spacing:0.760px;'>limitState1</div>
<div class='t' style='left:154.60px;top:303.00px;font-size:14.5px;font-weight:400;color:#111;letter-spacing:0.545px;'>myMonteCarlo</div>
<div class='t' style='left:154.60px;top:322.00px;font-size:14.5px;font-weight:400;color:#111;letter-spacing:0.643px;'>myformIS</div>
<div class='t' style='left:15.30px;top:668.00px;font-size:14px;font-weight:700;color:#111;letter-spacing:0.546px;'>Graph settings</div>
<div class='t' style='left:19.30px;top:706.00px;font-size:14px;font-weight:400;color:#1a1a1a;letter-spacing:0.900px;'>Title</div>
<div class='t' style='left:28.00px;top:742.00px;font-size:14px;font-weight:400;color:#1a1a1a;letter-spacing:0.060px;'>X-axis</div>
<div class='t' style='left:85.10px;top:743.00px;font-size:14px;font-weight:400;color:#1a1a1a;letter-spacing:0.420px;'>Y-axis</div>
<div class='t' style='left:285.00px;top:109.00px;font-size:14px;font-weight:700;color:#111;letter-spacing:0.780px;'>Monte Carlo</div>
<div class='t' style='left:277.70px;top:140.00px;font-size:14px;font-weight:400;color:#1a1a1a;letter-spacing:1.500px;'>Output</div>
<div class='t' style='left:293.30px;top:181.00px;font-size:14px;font-weight:400;color:#111;letter-spacing:0.000px;'>S</div>
<div class='t' style='left:384.80px;top:149.00px;font-size:14px;font-weight:400;color:#1a1a1a;letter-spacing:0.667px;'>Summary</div>
<div class='t' style='left:467.30px;top:149.00px;font-size:14px;font-weight:400;color:#1a1a1a;letter-spacing:0.950px;'>Histogram</div>
<div class='t' style='left:706.60px;top:149.00px;font-size:14px;font-weight:400;color:#1a1a1a;letter-spacing:0.700px;'>Parameters</div>
<div class='t' style='left:804.10px;top:149.00px;font-size:14px;font-weight:400;color:#1a1a1a;letter-spacing:1.475px;'>Model</div>
<div class='t' style='left:556.60px;top:149.00px;font-size:14px;font-weight:400;color:#1a1a1a;letter-spacing:0.600px;'>Convergence graph</div>
<div class='t' style='left:493.50px;top:186.00px;font-size:18px;font-weight:700;color:#111;letter-spacing:0.539px;'>Probability estimate convergence graph at level 0.95</div>
<div class='t' style='left:420.70px;top:210.00px;font-size:12.5px;font-weight:400;color:#1a1a1a;letter-spacing:0.150px;'>0.002</div>
<div class='t' style='left:413.50px;top:288.00px;font-size:12.5px;font-weight:400;color:#1a1a1a;letter-spacing:0.160px;'>0.0015</div>
<div class='t' style='left:421.10px;top:365.00px;font-size:12.5px;font-weight:400;color:#1a1a1a;letter-spacing:0.050px;'>0.001</div>
<div class='t' style='left:413.50px;top:443.00px;font-size:12.5px;font-weight:400;color:#1a1a1a;letter-spacing:0.160px;'>0.0005</div>
<div class='t' style='left:445.30px;top:520.00px;font-size:12.5px;font-weight:400;color:#1a1a1a;letter-spacing:0.000px;'>0</div>
<div class='t' style='left:408.40px;top:597.00px;font-size:12.5px;font-weight:400;color:#1a1a1a;letter-spacing:0.317px;'>-0.0005</div>
<div class='t' style='left:415.90px;top:675.00px;font-size:12.5px;font-weight:400;color:#1a1a1a;letter-spacing:0.280px;'>-0.001</div>
<div class='t' style='left:467.50px;top:697.00px;font-size:12.5px;font-weight:400;color:#1a1a1a;letter-spacing:0.000px;'>1</div>
<div class='t' style='left:590.15px;top:697.00px;font-size:12.5px;font-weight:400;color:#1a1a1a;letter-spacing:-0.100px;'>10</div>
<div class='t' style='left:712.60px;top:697.00px;font-size:12.5px;font-weight:400;color:#1a1a1a;letter-spacing:0.100px;'>100</div>
<div class='t' style='left:835.30px;top:697.00px;font-size:12.5px;font-weight:400;color:#1a1a1a;letter-spacing:0.333px;'>1000</div>
<div class='t' style='left:957.35px;top:697.00px;font-size:12.5px;font-weight:400;color:#1a1a1a;letter-spacing:0.525px;'>10000</div>
<div class='t' style='left:662.90px;top:712.00px;font-size:16px;font-weight:700;color:#111;letter-spacing:-0.050px;'>Number of calls</div>
<div class='t' style='left:546.30px;top:738.00px;font-size:14px;font-weight:400;color:#1a1a1a;letter-spacing:0.826px;'>Probability estimate</div>
<div class='t' style='left:708.60px;top:738.00px;font-size:14px;font-weight:400;color:#1a1a1a;letter-spacing:0.790px;'>Lower bound</div>
<div class='t' style='left:822.00px;top:738.00px;font-size:14px;font-weight:400;color:#1a1a1a;letter-spacing:0.970px;'>Upper bound</div>
</body></html>
